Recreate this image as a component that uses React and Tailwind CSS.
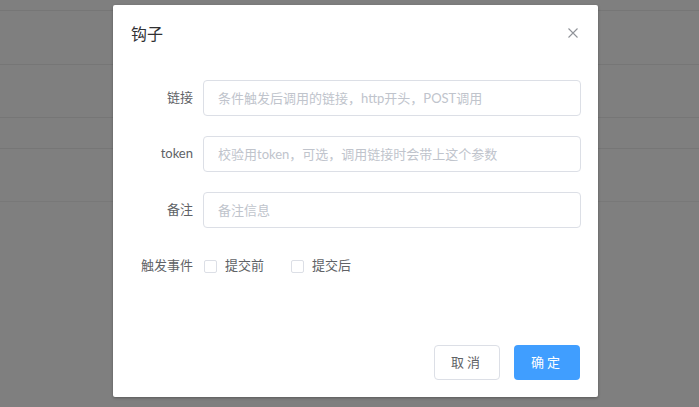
import React from 'react';

const FONT = { fontFamily: 'Lato, "Noto Sans CJK SC", sans-serif' };

const rows = [
  { label: '链接', placeholder: '条件触发后调用的链接，http开头，POST调用' },
  { label: 'token', placeholder: '校验用token，可选，调用链接时会带上这个参数' },
  { label: '备注', placeholder: '备注信息' },
];

const Checkbox = ({ label }) => (
  <label className="flex items-center gap-[8px] mr-[27px] cursor-pointer">
    <span className="w-[13px] h-[13px] border border-[#dcdfe6] rounded-[2px] bg-white" />
    <span className="text-[13px] text-[#606266]">{label}</span>
  </label>
);

export default function App() {
  return (
    <div className="relative w-[699px] h-[407px] overflow-hidden bg-[#7f7f7f]" style={FONT}>
      {/* page behind the mask */}
      <div className="flex flex-col">
        <div className="h-[11px] border-b border-[#767676]" />
        <div className="h-[54px] border-b border-[#767676]" />
        <div className="h-[53px] border-b border-[#767676]" />
        <div className="h-[31px] border-b border-[#767676]" />
        <div className="h-[53px] border-b border-[#787878]" />
      </div>

      <div className="absolute left-[113px] top-[5px] w-[485px] h-[392px] bg-white rounded-[2px] shadow-[0_1px_3px_rgba(0,0,0,0.3)] flex flex-col">
        <div className="relative pt-[17px] px-[18px]">
          <span className="text-[16px] leading-[24px] text-[#303133]">钩子</span>
          <button className="absolute right-[20px] top-[23px] text-[#909399]">
            <svg width="10" height="10" viewBox="0 0 10 10" stroke="currentColor" strokeWidth="1.1">
              <path d="M0.5 0.5 L9.5 9.5 M9.5 0.5 L0.5 9.5" />
            </svg>
          </button>
        </div>

        <div className="mt-[34px] pl-[20px] flex flex-col gap-[20px]">
          {rows.map((r) => (
            <div key={r.label} className="flex items-center">
              <div className="w-[70px] pr-[10px] text-right text-[13px] text-[#606266]">{r.label}</div>
              <input
                className="w-[378px] h-[36px] px-[14px] border border-[#dcdfe6] rounded-[4px] text-[13px] text-[#606266] outline-none placeholder:text-[#c0c4cc]"
                placeholder={r.placeholder}
                style={FONT}
              />
            </div>
          ))}
          <div className="flex items-center h-[36px]">
            <div className="w-[70px] pr-[10px] text-right text-[13px] text-[#606266]">触发事件</div>
            <div className="flex items-center pl-[1px]">
              <Checkbox label="提交前" />
              <Checkbox label="提交后" />
            </div>
          </div>
        </div>

        <div className="mt-auto flex justify-end gap-[14px] pr-[18px] pb-[17px]">
          <button className="w-[66px] h-[35px] border border-[#dcdfe6] rounded-[4px] bg-white text-[13px] text-[#606266] tracking-[3px]">取消</button>
          <button className="w-[66px] h-[35px] rounded-[4px] bg-[#409eff] text-[13px] text-white tracking-[3px]">确定</button>
        </div>
      </div>
    </div>
  );
}
